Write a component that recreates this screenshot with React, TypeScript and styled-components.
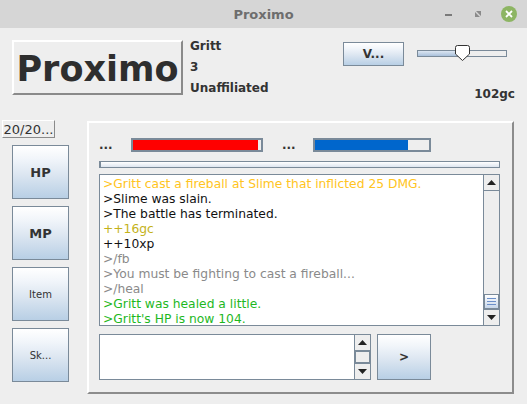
import React from 'react'
import styled, { createGlobalStyle } from 'styled-components'

const GlobalStyle = createGlobalStyle`
  html, body {
    margin: 0;
    padding: 0;
    background: #eeeeee;
    font-family: "DejaVu Sans", "Liberation Sans", sans-serif;
  }
`

const Window = styled.div`
  width: 527px;
  height: 404px;
  display: flex;
  flex-direction: column;
  background: #eeeeee;
  overflow: hidden;
`

const TitleBar = styled.div`
  height: 28px;
  flex: none;
  background: #d6d6d6;
  display: flex;
  align-items: center;
  justify-content: center;
  position: relative;
  font-weight: bold;
  font-size: 13px;
  color: #6e6e6e;
`

const TitleControls = styled.div`
  position: absolute;
  right: 10px;
  top: 0;
  height: 28px;
  display: flex;
  align-items: center;
  gap: 17px;
`

const CloseDot = styled.div`
  width: 16px;
  height: 16px;
  border-radius: 50%;
  background: #8db563;
  display: flex;
  align-items: center;
  justify-content: center;
`

const Header = styled.div`
  height: 90px;
  flex: none;
  display: flex;
  padding: 12px 0 0 12px;
  box-sizing: border-box;
`

const BigButton = styled.div`
  width: 171px;
  height: 55px;
  box-sizing: border-box;
  border: 2px solid;
  border-color: #ffffff #8a8a8a #8a8a8a #ffffff;
  background: #eeeeee;
  display: flex;
  align-items: center;
  justify-content: center;
  font-weight: bold;
  font-size: 35px;
  color: #2e2e2e;
  padding-top: 2px;
`

const Info = styled.div`
  margin: -4px 0 0 7px;
  display: flex;
  flex-direction: column;
  font-weight: bold;
  font-size: 12px;
  line-height: 21px;
  color: #333333;
`

const HeaderRight = styled.div`
  flex: 1;
  display: flex;
  flex-direction: column;
  align-items: flex-end;
  padding-right: 12px;
`

const ControlRow = styled.div`
  display: flex;
  align-items: center;
  margin-top: 2px;
  gap: 13px;
  padding-right: 8px;
`

const OceanButton = styled.div<{ $w: number; $h: number; $size?: number; $bold?: boolean }>`
  width: ${p => p.$w}px;
  height: ${p => p.$h}px;
  box-sizing: border-box;
  border: 1px solid #7a8a99;
  background: linear-gradient(#ffffff 0%, #f1f5fa 25%, #dce6f1 55%, #b8cfe5 100%);
  display: flex;
  align-items: center;
  justify-content: center;
  font-size: ${p => p.$size ?? 12}px;
  font-weight: ${p => (p.$bold ? 'bold' : 'normal')};
  color: #333333;
  flex: none;
`

const Slider = styled.div`
  width: 90px;
  height: 16px;
  position: relative;
`

const SliderTrack = styled.div`
  position: absolute;
  left: 0;
  right: 0;
  top: 4px;
  height: 7px;
  box-sizing: border-box;
  border: 1px solid #7a8a99;
  background: #eeeeee;
  overflow: hidden;
`

const SliderFill = styled.div`
  height: 100%;
  background: linear-gradient(#dce6f1, #a9c0db);
  border-right: 1px solid #7a8a99;
`

const SliderThumb = styled.svg`
  position: absolute;
  top: -1px;
`

const Gold = styled.div`
  margin-top: 21px;
  font-weight: bold;
  font-size: 12px;
  color: #333333;
`

const Main = styled.div`
  flex: 1;
  display: flex;
`

const Side = styled.div`
  width: 87px;
  flex: none;
  display: flex;
  flex-direction: column;
  padding-top: 2px;
`

const SmallButton = styled.div`
  margin-left: 2px;
  width: 53px;
  height: 18px;
  box-sizing: border-box;
  border: 1px solid;
  border-color: #ffffff #8a8a8a #8a8a8a #ffffff;
  display: flex;
  align-items: center;
  justify-content: center;
  font-size: 13px;
  color: #333333;
  white-space: nowrap;
  overflow: hidden;
`

const ActionList = styled.div`
  display: flex;
  flex-direction: column;
  gap: 7px;
  margin: 7px 0 0 12px;
`

const Panel = styled.div`
  width: 427px;
  height: 273px;
  margin-top: 3px;
  box-sizing: border-box;
  border: 2px solid;
  border-color: #ffffff #8c8c8c #8c8c8c #ffffff;
  display: flex;
  flex-direction: column;
  padding: 15px 12px 0 10px;
`

const StatusRow = styled.div`
  display: flex;
  align-items: center;
  height: 14px;
`

const Dots = styled.div<{ $w: number }>`
  width: ${p => p.$w}px;
  font-weight: bold;
  font-size: 12px;
  color: #333333;
  line-height: 14px;
`

const Bar = styled.div<{ $w: number }>`
  width: ${p => p.$w}px;
  height: 14px;
  box-sizing: border-box;
  border: 2px solid #7a8a99;
  background: #eeeeee;
  display: flex;
  flex: none;
`

const BarFill = styled.div<{ $color: string }>`
  height: 100%;
  background: ${p => p.$color};
`

const Progress = styled.div`
  margin-top: 9px;
  width: 401px;
  height: 7px;
  box-sizing: border-box;
  border: 1px solid #7a8a99;
  background: linear-gradient(#ffffff 0%, #dde5ef 100%);
  border-left-width: 2px;
`

const Log = styled.div`
  margin-top: 6px;
  width: 401px;
  height: 152px;
  box-sizing: border-box;
  border: 1px solid #7a8a99;
  background: #ffffff;
  display: flex;
`

const LogText = styled.div`
  flex: 1;
  padding: 2px 0 0 3px;
  font-size: 12.3px;
  line-height: 15px;
  overflow: hidden;
  white-space: nowrap;
`

const Line = styled.div<{ $color: string }>`
  color: ${p => p.$color};
`

const ScrollBar = styled.div`
  width: 16px;
  flex: none;
  display: flex;
  flex-direction: column;
  background: #eeeeee;
  border-left: 1px solid #7a8a99;
  box-sizing: border-box;
`

const ArrowButton = styled.div`
  height: 16px;
  flex: none;
  box-sizing: border-box;
  border-bottom: 1px solid #7a8a99;
  background: #eeeeee;
  display: flex;
  align-items: center;
  justify-content: center;
  &:last-child {
    border-bottom: none;
    border-top: 1px solid #7a8a99;
  }
`

const ScrollTrack = styled.div`
  flex: 1;
  display: flex;
  flex-direction: column;
  justify-content: flex-end;
`

const Thumb = styled.div<{ $h: number }>`
  height: ${p => p.$h}px;
  box-sizing: border-box;
  border: 1px solid #7a8a99;
  background: linear-gradient(#ffffff, #c6d6ea);
  display: flex;
  flex-direction: column;
  align-items: center;
  justify-content: center;
  gap: 2px;
`

const Grip = styled.div`
  width: 9px;
  height: 1px;
  background: #6b8fc9;
`

const InputRow = styled.div`
  margin-top: 8px;
  display: flex;
  gap: 6px;
`

const Input = styled.div`
  width: 272px;
  height: 46px;
  box-sizing: border-box;
  border: 1px solid #7a8a99;
  background: #ffffff;
  display: flex;
  justify-content: flex-end;
`

const Triangle = ({ up }: { up?: boolean }) => (
  <svg width="9" height="5" viewBox="0 0 9 5">
    <path d={up ? 'M0 5 L4.5 0 L9 5 Z' : 'M0 0 L9 0 L4.5 5 Z'} fill="#222" />
  </svg>
)

const logLines: { text: string; color: string }[] = [
  { text: '>Gritt cast a fireball at Slime that inflicted 25 DMG.', color: '#ffc422' },
  { text: '>Slime was slain.', color: '#111111' },
  { text: '>The battle has terminated.', color: '#111111' },
  { text: '++16gc', color: '#c4b21a' },
  { text: '++10xp', color: '#111111' },
  { text: '>/fb', color: '#8a8a8a' },
  { text: '>You must be fighting to cast a fireball...', color: '#8a8a8a' },
  { text: '>/heal', color: '#8a8a8a' },
  { text: '>Gritt was healed a little.', color: '#1eb81e' },
  { text: ">Gritt's HP is now 104.", color: '#1eb81e' },
]

const actions = [
  { label: 'HP', size: 13, bold: true },
  { label: 'MP', size: 13, bold: true },
  { label: 'Item', size: 10, bold: false },
  { label: 'Sk...', size: 10, bold: false },
]

const App: React.FC = () => {
  return (
    <Window>
      <GlobalStyle />
      <TitleBar>
        Proximo
        <TitleControls>
          <svg width="12" height="12" viewBox="0 0 12 12">
            <rect x="2" y="6" width="7" height="2" fill="#7a7a7a" />
          </svg>
          <svg width="12" height="12" viewBox="0 0 12 12">
            <path d="M3 4 L3 9 L8 9 Z M9 8 L9 3 L4 3 Z" fill="#8a8a8a" />
          </svg>
          <CloseDot>
            <svg width="8" height="8" viewBox="0 0 8 8">
              <path d="M1 1 L7 7 M7 1 L1 7" stroke="#ffffff" strokeWidth="1.8" />
            </svg>
          </CloseDot>
        </TitleControls>
      </TitleBar>
      <Header>
        <BigButton>Proximo</BigButton>
        <Info>
          <span>Gritt</span>
          <span>3</span>
          <span>Unaffiliated</span>
        </Info>
        <HeaderRight>
          <ControlRow>
            <OceanButton $w={61} $h={24} $bold>
              V...
            </OceanButton>
            <Slider>
              <SliderTrack>
                <SliderFill style={{ width: '44%' }} />
              </SliderTrack>
              <SliderThumb width="15" height="16" viewBox="0 0 15 16" style={{ left: 38 }}>
                <path d="M0.5 2.5 Q0.5 0.5 2.5 0.5 L12.5 0.5 Q14.5 0.5 14.5 2.5 L14.5 9 L7.5 15.5 L0.5 9 Z" fill="#ffffff" stroke="#333" />
              </SliderThumb>
            </Slider>
          </ControlRow>
          <Gold>102gc</Gold>
        </HeaderRight>
      </Header>
      <Main>
        <Side>
          <SmallButton>20/20...</SmallButton>
          <ActionList>
            {actions.map(a => (
              <OceanButton key={a.label} $w={57} $h={54} $size={a.size} $bold={a.bold}>
                {a.label}
              </OceanButton>
            ))}
          </ActionList>
        </Side>
        <Panel>
          <StatusRow>
            <Dots $w={32}>...</Dots>
            <Bar $w={132}>
              <BarFill $color="#ff0000" style={{ width: '98%' }} />
            </Bar>
            <Dots $w={31} style={{ marginLeft: 19 }}>...</Dots>
            <Bar $w={118}>
              <BarFill $color="#0066cc" style={{ width: '82%' }} />
            </Bar>
          </StatusRow>
          <Progress />
          <Log>
            <LogText>
              {logLines.map((l, i) => (
                <Line key={i} $color={l.color}>
                  {l.text}
                </Line>
              ))}
            </LogText>
            <ScrollBar>
              <ArrowButton>
                <Triangle up />
              </ArrowButton>
              <ScrollTrack>
                <Thumb $h={15}>
                  <Grip />
                  <Grip />
                  <Grip />
                </Thumb>
              </ScrollTrack>
              <ArrowButton>
                <Triangle />
              </ArrowButton>
            </ScrollBar>
          </Log>
          <InputRow>
            <Input>
              <ScrollBar>
                <ArrowButton>
                  <Triangle up />
                </ArrowButton>
                <ScrollTrack>
                  <Thumb $h={12} style={{ background: '#eeeeee', marginBottom: 'auto' }} />
                </ScrollTrack>
                <ArrowButton>
                  <Triangle />
                </ArrowButton>
              </ScrollBar>
            </Input>
            <OceanButton $w={54} $h={46} $bold>
              &gt;
            </OceanButton>
          </InputRow>
        </Panel>
      </Main>
    </Window>
  )
}

export default App
